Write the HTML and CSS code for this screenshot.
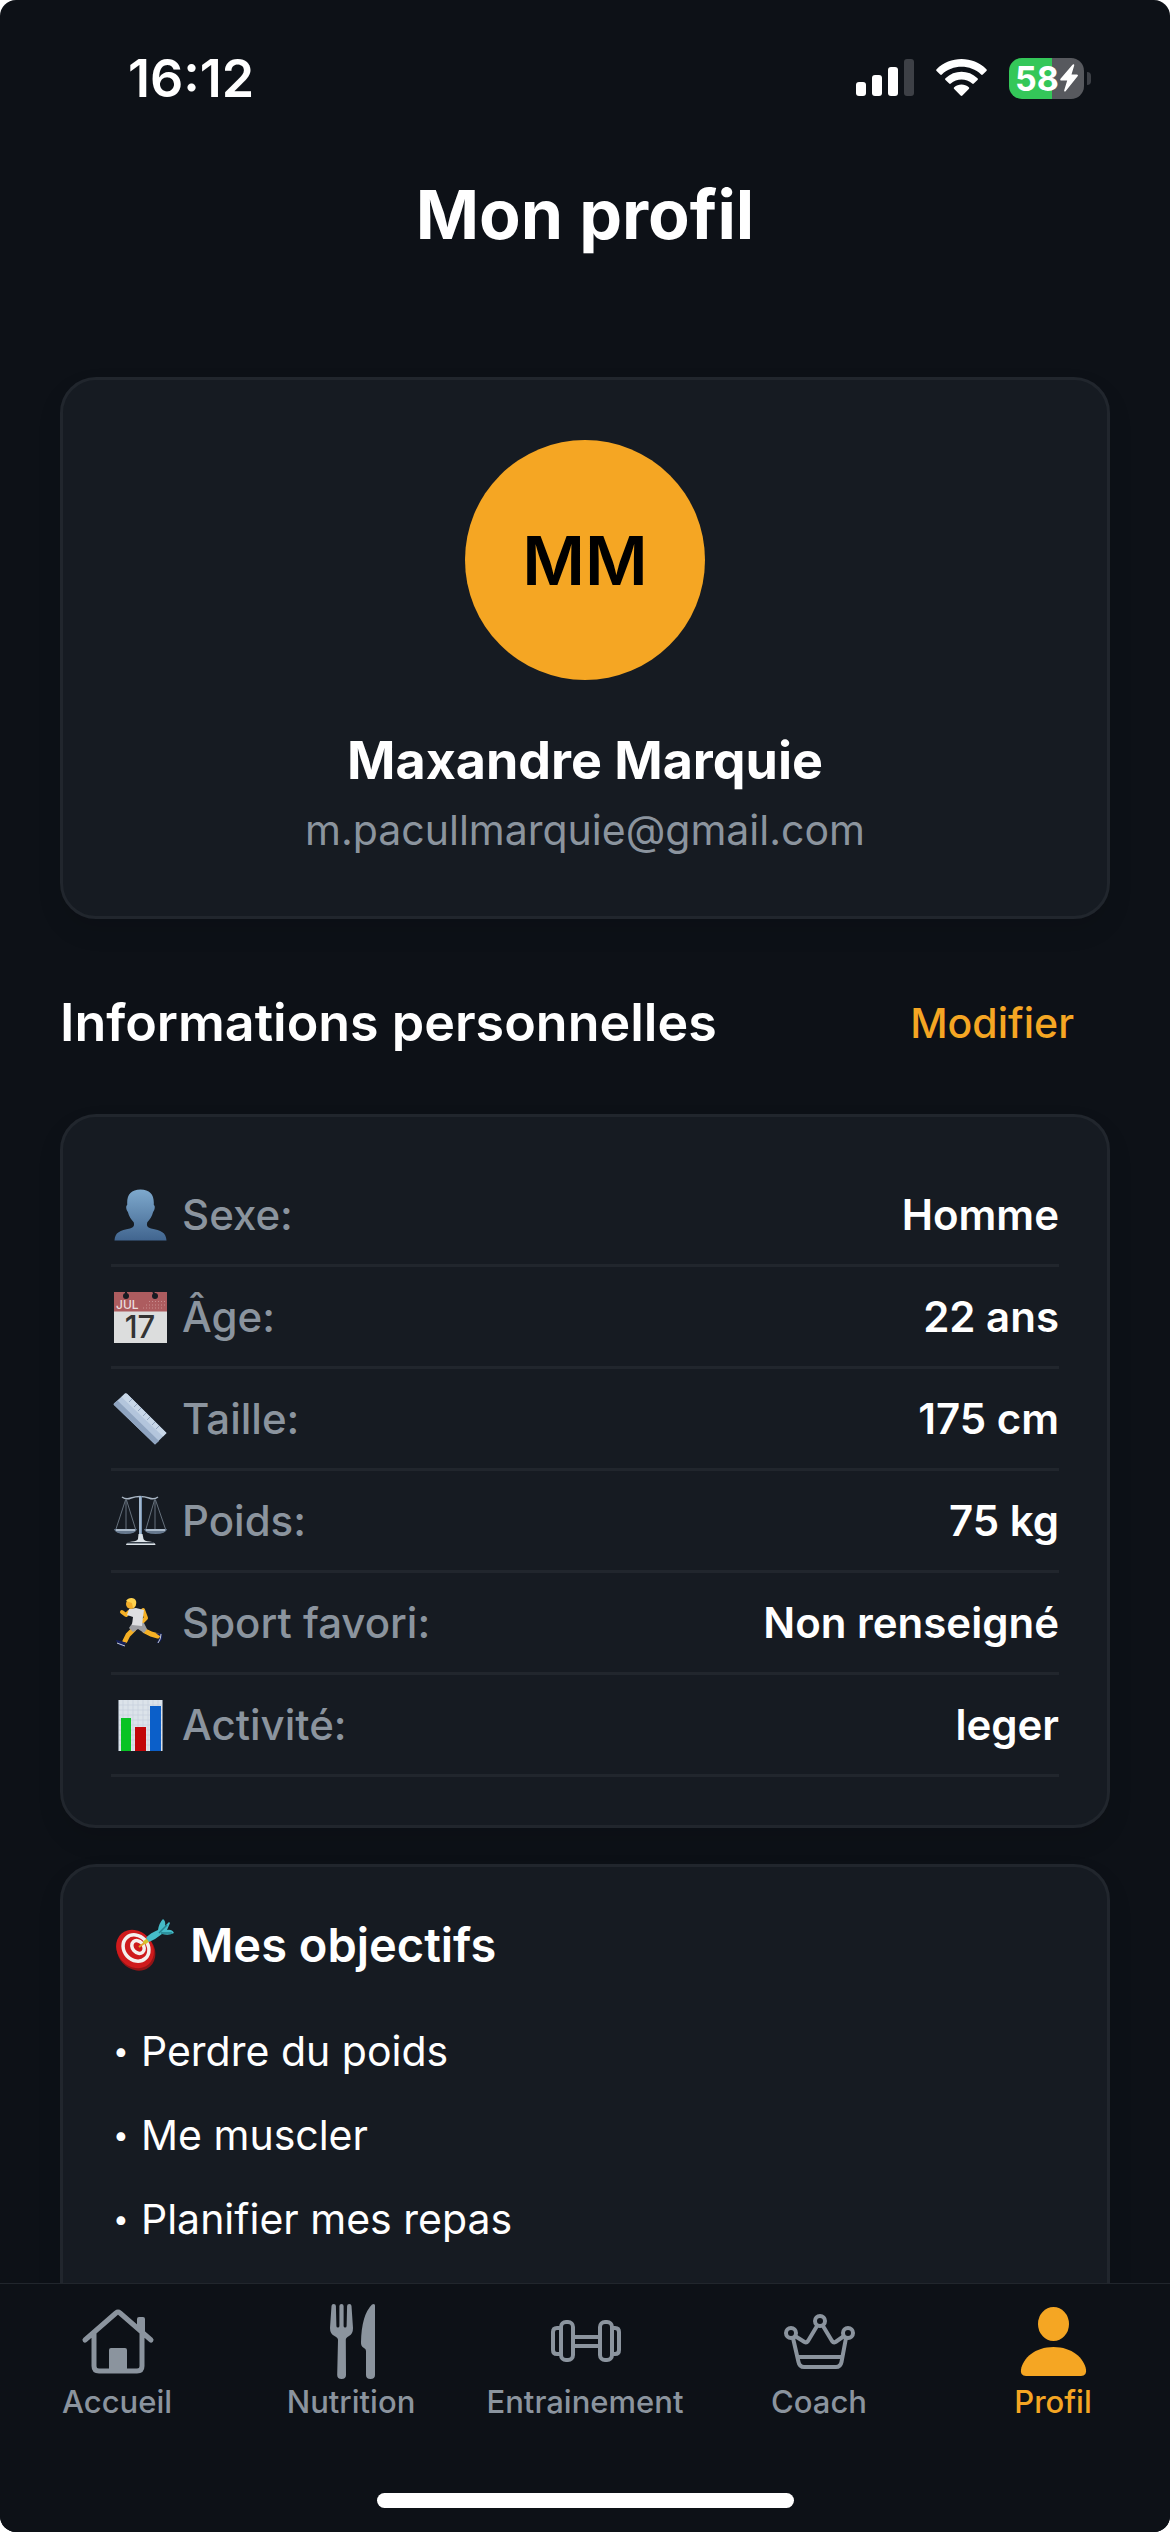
FILE: index.html
```html
<!DOCTYPE html>
<html lang="fr">
<head>
<meta charset="utf-8">
<meta name="viewport" content="width=device-width, initial-scale=1">
<title>Mon profil</title>
<link rel="stylesheet" href="styles.css">
</head>
<body>
<div class="app">
  <div class="status-bar">
    <time class="clock">16:12</time>
    <div class="indicators">
      <svg width="58" height="38" viewBox="0 0 58 38" aria-hidden="true">
        <g fill="#fff"><rect x="0" y="23" width="10" height="14" rx="3"/><rect x="16" y="16" width="10" height="21" rx="3"/><rect x="32" y="8" width="10" height="29" rx="3"/></g>
        <rect x="48" y="0" width="10" height="37" rx="3" fill="#3d4046"/>
      </svg>
      <svg width="51" height="38" viewBox="0 0 51 38" fill="#fff" aria-hidden="true">
        <path d="M.6 10.2C14-3.4 37-3.4 50.400 10.200c.6.6.6 1.200 0 1.800l-3.600 3.500c-.5.5-1.200.5-1.700 0-10.800-10.200-28.400-10.200-39.200 0-.5.5-1.200.5-1.700 0L.6 12c-.6-.6-.6-1.200 0-1.800z"/>
        <path d="M9.500 19.300c8.900-8.600 23.100-8.600 32 0 .6.6.6 1.200 0 1.700l-3.700 3.600c-.5.5-1.100.5-1.600 0-6-5.500-15.400-5.500-21.400 0-.5.5-1.100.5-1.600 0L9.500 21c-.6-.5-.6-1.100 0-1.700z"/>
        <path d="M18.200 28.300c4.100-3.600 10.500-3.600 14.600 0 .6.5.6 1.100 0 1.700l-6.400 6.500c-.5.600-1.300.6-1.800 0L18.200 30c-.6-.6-.6-1.200 0-1.700z"/>
      </svg>
      <div class="battery">
        <div class="battery-body">
          <span>58</span>
          <svg width="18" height="28" viewBox="0 0 18 28" fill="#fff" aria-hidden="true"><path d="M12.500.8c.8-1.100 2-.6 1.700.7L11.500 10.500h5.300c1.100 0 1.500.9.8 1.800L5.800 27c-.8 1-2 .5-1.600-.8L7.200 16.500H1.400c-1.100 0-1.600-.9-.9-1.800z"/></svg>
        </div>
        <div class="battery-tip"></div>
      </div>
    </div>
  </div>

  <header class="page-header"><h1>Mon profil</h1></header>

  <main class="content">
    <section class="card identity">
      <div class="avatar">MM</div>
      <h2 class="name">Maxandre Marquie</h2>
      <p class="email">m.pacullmarquie@gmail.com</p>
    </section>

    <div class="section-header">
      <h2>Informations personnelles</h2>
      <button type="button" class="edit">Modifier</button>
    </div>

    <section class="card">
      <dl class="info">
        <div class="row">
          <dt>
            <svg class="emoji" viewBox="0 0 54 52" aria-hidden="true">
              <defs><linearGradient id="bust" x1="0" y1="0" x2="0" y2="1"><stop offset="0" stop-color="#7ea9cd"/><stop offset="1" stop-color="#41658f"/></linearGradient></defs>
              <path fill="url(#bust)" d="M27.500.500c9 0 13.300 5 13.300 13v2.500c1.600.8 1.200 4.500-.7 7-1 4.500-3.200 7.400-5.800 10.300-1 3.400.1 5.200 3.700 6.100C48 41.600 53 43 53.500 51.500H1.500C2 43 7 41.600 17 39.400c3.600-.9 4.700-2.700 3.700-6.100-2.600-2.900-4.800-5.800-5.800-10.300-1.900-2.500-2.300-6.200-.7-7v-2.500c0-8 4.300-13 13.300-13z"/>
            </svg>
            Sexe:
          </dt>
          <dd>Homme</dd>
        </div>
        <div class="row">
          <dt>
            <svg class="emoji" viewBox="0 0 54 52" aria-hidden="true">
              <path fill="#dcdddd" d="M1 20h53v32H1z"/><path fill="#ad5c5f" d="M1 1h53v19.500H1z"/>
              <g fill="#171b22"><circle cx="13" cy="5" r="3"/><circle cx="42" cy="5" r="3"/><path d="M12 0h2v5h-2zM39 0h2l2 5h-2z"/></g>
              <path stroke="#c98f91" stroke-dasharray="1 2" d="M36 10.500h16M33 14h19M30 17h19"/>
              <text class="cal-month" x="3" y="18">JUL</text><text class="cal-day" x="27" y="47" text-anchor="middle">17</text>
            </svg>
            Âge:
          </dt>
          <dd>22 ans</dd>
        </div>
        <div class="row">
          <dt>
            <svg class="emoji" viewBox="0 0 54 52" aria-hidden="true">
              <path fill="#b3c5dc" d="M1 10.500 12 .5q1-.8 2 .2L53.500 40 42 51.500 1 12q-.7-.7 0-1.500z"/>
              <path fill="#8fa4c0" d="M1 10.500 4.500 7.500 46 48 42 51.500 1 12q-.7-.7 0-1.500z"/>
              <path fill="#c8d7e8" d="m12 .5 2 .2L53.500 40l-3.500 3.500L8.500 4z"/>
              <path fill="none" stroke="#8397b3" stroke-width=".8" d="m16 9 3-3m2 8 3-3m1 7 3-3m2 8 3-3m1 7 3-3m2 8 3-3m1 7 3-3"/>
            </svg>
            Taille:
          </dt>
          <dd>175 cm</dd>
        </div>
        <div class="row">
          <dt>
            <svg class="emoji" viewBox="0 0 54 52" fill="none" aria-hidden="true">
              <path stroke="#65707c" d="M13 4v32M42 4v32M12.500 5 3 34M13.500 5l9 29M41.500 5 33 34M42.500 5l10 29"/>
              <path stroke="#a8b5c3" stroke-width="1.500" d="M9 2q4 3 9 1 9-3 18 0 5 2 9-1"/>
              <path stroke="#7893b1" stroke-width="3" d="M27.500 1v44"/><path stroke="#c9d9e8" d="M27 1v44"/>
              <path fill="#67798e" d="M1 34h23q-1 5-11.500 5T1 34zM31 34h23q-1 5-11.500 5T31 34z"/>
              <path stroke="#c2d0de" stroke-width="1.500" d="M3 35h19M33 35h19"/>
              <path fill="#dce3e9" d="M25.500 39h4l1 5q1 2 6 2.500 6 1 6 3.500H13q0-2.500 6-3.500 5-.5 6-2.500z"/>
              <path fill="#343e49" d="M15 47h25l1 1.500H14z"/>
            </svg>
            Poids:
          </dt>
          <dd>75 kg</dd>
        </div>
        <div class="row">
          <dt>
            <svg class="emoji" viewBox="0 0 54 52" aria-hidden="true">
              <path fill="none" stroke="#f5b024" stroke-width="5" stroke-linecap="round" stroke-linejoin="round" d="m21 32-6 6-3 6M32 34l6 3 7 2"/>
              <path fill="none" stroke="#f5b024" stroke-width="4" stroke-linecap="round" stroke-linejoin="round" d="m30 13 3 8-5 5M16 15l-3 3-4-3"/>
              <path fill="#9d9ea2" d="m20 25 11 1 3 6-3 4-6-4-5 3-4-4z"/>
              <path fill="#dedfe1" d="m16 12 7-1 8 2-1 7-1 9-10-1 1-8-6-2z"/>
              <circle cx="18" cy="7" r="5" fill="#f2ae2b"/><path fill="#ffd34f" d="M13 4c2-4 9-4 10 0 1 3-1 6-3 7l-1-5z"/>
              <path fill="#15205c" d="m4 44 8 2-2 3q-4-1-6-5zM45 37l3 2-3 6q5-2 3-8z" stroke="#15205c" stroke-width="1.500"/>
              <path stroke="#c7ccd5" d="m4 46 8 3M45 46q3-4 3-9" fill="none"/>
            </svg>
            Sport favori:
          </dt>
          <dd>Non renseigné</dd>
        </div>
        <div class="row">
          <dt>
            <svg class="emoji" viewBox="0 0 54 52" aria-hidden="true">
              <path fill="#dce3ea" d="M5 1h45v51H5z"/>
              <path stroke="#c5cfda" stroke-width=".6" d="M5 6h45M5 11h45M5 16h45M5 21h45M5 26h45M5 31h45M5 36h45M5 41h45M5 46h45M10 1v51M15 1v51M20 1v51M25 1v51M30 1v51M35 1v51M40 1v51M45 1v51"/>
              <path fill="#08c324" d="M8 19h10v33H8z"/><path fill="#c20508" d="M22 28h11v24H22z"/><path fill="#0b5fc9" d="M37 7h11v45H37z"/>
              <path stroke="#7b848f" d="M5.500 1v51M49.500 1v51"/>
            </svg>
            Activité:
          </dt>
          <dd>leger</dd>
        </div>
      </dl>
    </section>

    <section class="card goals">
      <h2>
        <svg class="emoji-large" viewBox="0 0 60 52" aria-hidden="true">
          <ellipse cx="22" cy="32" rx="18" ry="21" transform="rotate(-42 22 32)" fill="#931416"/>
          <ellipse cx="21" cy="30" rx="17.500" ry="20.500" transform="rotate(-42 21 30)" fill="#cf1a1c"/>
          <g fill="none" stroke="#f4f0ee" stroke-width="3.500"><ellipse cx="22" cy="29" rx="12" ry="14" transform="rotate(-42 22 29)"/><ellipse cx="24" cy="28" rx="5.500" ry="7" transform="rotate(-42 24 28)"/></g>
          <path stroke="#e5a52b" stroke-width="2" d="m25 28 8-6"/><path stroke="#d7c528" stroke-width="4" d="m30 24 4-3"/>
          <path fill="#45bcc8" d="M32 19q4-5 12-8Q45 4 49 0q3 2 2 7l4-4 1 1-3 7q5-1 7 3-5 3-12 1-6 5-13 8z"/>
          <path fill="none" stroke="#25838f" stroke-width="1.500" d="m45 14 8-8M47 14l11 0"/>
        </svg>
        Mes objectifs
      </h2>
      <ul>
        <li><span class="bullet">•</span>Perdre du poids</li>
        <li><span class="bullet">•</span>Me muscler</li>
        <li><span class="bullet">•</span>Planifier mes repas</li>
      </ul>
    </section>
  </main>

  <footer class="tab-bar">
    <nav class="tabs" aria-label="Navigation principale">
      <a class="tab" href="#accueil">
        <svg viewBox="0 0 80 80" fill="none" stroke="currentColor" stroke-width="5" stroke-linecap="round" stroke-linejoin="round" aria-hidden="true">
          <path d="M8 40 39 13q2-1.600 4 0l31 27M17 33v33q0 5 5 5h38q5 0 5-5V33"/>
          <path fill="currentColor" stroke="none" d="M32 50q0-2 2-2h14q2 0 2 2v21H32zM60 19q0-2 2-2h4q2 0 2 2v17l-8-6z"/>
        </svg>
        Accueil
      </a>
      <a class="tab" href="#nutrition">
        <svg viewBox="0 0 80 80" fill="currentColor" aria-hidden="true">
          <path d="M20.500 6q0-2 2.200-2t2.200 2l.5 20q0 1.500 1.500 1.500t1.500-1.500V6q0-2 2.100-2t2.100 2v20q0 1.500 1.500 1.500t1.500-1.500l.5-20q0-2 2.200-2t2.200 2L42 28q0 6-4 8-3.500 1.800-3.200 4L35 75q0 4-4.400 4T26.200 75L27 40q.2-2.200-3.500-4-4.500-2-4.500-8z"/>
          <path d="M61 4.500q3-1.500 3 1V75q0 4-4.500 4T55 75V51q0-2-2-3-3.300-1.600-3-6 .5-27 11-37.500z"/>
        </svg>
        Nutrition
      </a>
      <a class="tab" href="#entrainement">
        <svg viewBox="0 0 80 80" fill="none" stroke="currentColor" stroke-width="4" aria-hidden="true">
          <rect x="16" y="22" width="12" height="38" rx="5"/><rect x="55" y="22" width="12" height="38" rx="5"/>
          <path d="M15 28h-3q-4 0-4 4v18q0 4 4 4h3M68 28h2q4 0 4 4v18q0 4-4 4h-2M29 37h25M29 46h25"/>
        </svg>
        Entrainement
      </a>
      <a class="tab" href="#coach">
        <svg viewBox="0 0 80 80" fill="none" stroke="currentColor" stroke-width="4" stroke-linejoin="round" aria-hidden="true">
          <circle cx="12" cy="33" r="5"/><circle cx="41" cy="21" r="5"/><circle cx="69" cy="33" r="5"/>
          <path d="m14 38 5.500 24q1 5 5.500 5h32q4.500 0 5.500-5L67 38M19 57h44M16 36l9.500 6q2 1 3.500-1l9-15M44 26l9 15q1.500 2 3.500 1l8.500-6"/>
        </svg>
        Coach
      </a>
      <a class="tab active" href="#profil" aria-current="page">
        <svg viewBox="0 0 80 80" fill="currentColor" aria-hidden="true">
          <ellipse cx="40.500" cy="24" rx="15.500" ry="17"/>
          <path d="M40.500 47C59 47 71 58 73 69.500q1 6.500-5 6.500H13q-6 0-5-6.500C10 58 22 47 40.500 47z"/>
        </svg>
        Profil
      </a>
    </nav>
    <div class="home-indicator"></div>
  </footer>
</div>
</body>
</html>
```
FILE: styles.css
```css
:root {
  --page: #0d1117;
  --card: #161b22;
  --line: #21262d;
  --muted: #8b949e;
  --accent: #f5a623;
}

* { box-sizing: border-box; margin: 0; padding: 0; }

body {
  background: #fff;
  color: #fff;
  font-family: Inter, "Liberation Sans", sans-serif;
}

svg { display: block; flex: none; overflow: visible; }

.app {
  display: flex;
  flex-direction: column;
  height: 100vh;
  overflow: hidden;
  border-radius: 16px;
  background: var(--page);
}

.status-bar {
  display: flex;
  flex: none;
  align-items: center;
  justify-content: space-between;
  height: 156px;
  padding: 0 79px 0 128px;
}

.clock { font-size: 52px; font-weight: 600; }

.indicators { display: flex; align-items: center; gap: 22px; }

.battery { display: flex; align-items: center; gap: 3px; }

.battery-body {
  display: flex;
  align-items: center;
  justify-content: center;
  gap: 1px;
  width: 75px;
  height: 41px;
  border-radius: 13px;
  background: linear-gradient(90deg, #34c759 57%, #57595e 57%);
  font-size: 34px;
  font-weight: 700;
  line-height: 41px;
}

.battery-tip {
  width: 4px;
  height: 13px;
  border-radius: 0 4px 4px 0;
  background: #3d4046;
}

.page-header {
  flex: none;
  padding: 16px 60px;
  text-align: center;
}

h1 { font-size: 68px; font-weight: 700; line-height: 85px; }

.content {
  flex: 1;
  min-height: 0;
  padding: 104px 60px 60px;
  overflow-y: auto;
  scrollbar-width: none;
}

.card {
  padding: 48px;
  border: 3px solid var(--line);
  border-radius: 36px;
  background: var(--card);
  box-shadow: 0 12px 24px rgba(0, 0, 0, 0.1);
}

.identity {
  display: flex;
  flex-direction: column;
  align-items: center;
  padding: 60px;
}

.avatar {
  display: flex;
  align-items: center;
  justify-content: center;
  width: 240px;
  height: 240px;
  border-radius: 50%;
  background: var(--accent);
  color: #000;
  font-size: 68px;
  font-weight: 600;
}

.name { margin-top: 48px; font-size: 52px; font-weight: 700; line-height: 66px; }

.email { margin-top: 10px; color: var(--muted); font-size: 41px; line-height: 52px; }

.section-header {
  display: flex;
  align-items: center;
  justify-content: space-between;
  padding: 74px 0 61px;
}

.section-header h2 { font-size: 52px; font-weight: 600; line-height: 60px; }

.edit {
  padding: 0 36px;
  border: 0;
  background: none;
  color: var(--accent);
  font: 500 41px/60px Inter, "Liberation Sans", sans-serif;
}

.row {
  display: flex;
  align-items: center;
  justify-content: space-between;
  height: 102px;
  border-bottom: 3px solid var(--line);
}

.row dt {
  display: flex;
  align-items: center;
  gap: 15px;
  color: var(--muted);
  font-size: 42px;
  font-weight: 500;
}

.row dd { font-size: 42px; font-weight: 600; }

.emoji { width: 54px; height: 52px; margin-left: 2px; }

.cal-month { fill: #eadfdf; font-size: 12px; font-weight: 500; }
.cal-day { fill: #333; font-size: 31px; font-weight: 500; }

.goals { margin-top: 36px; }

.goals h2 {
  display: flex;
  align-items: center;
  gap: 16px;
  font-size: 47px;
  font-weight: 600;
  line-height: 60px;
}

.emoji-large { width: 60px; height: 52px; margin-left: 3px; }

.goals ul { margin-top: 46px; list-style: none; }

.goals li { display: flex; margin-bottom: 24px; font-size: 41px; line-height: 60px; }

.bullet { width: 30px; padding-left: 2px; font-size: 28px; }

.tab-bar {
  flex: none;
  padding: 16px 0 24px;
  border-top: 1px solid var(--line);
  background: var(--page);
}

.tabs { display: grid; grid-template-columns: repeat(5, 1fr); }

.tab {
  display: flex;
  flex-direction: column;
  align-items: center;
  gap: 2px;
  color: var(--muted);
  font-size: 31px;
  font-weight: 500;
  line-height: 40px;
  text-decoration: none;
}

.tab svg { width: 80px; height: 80px; }

.tab.active { color: var(--accent); }

.home-indicator {
  width: 417px;
  height: 15px;
  margin: 71px auto 0;
  border-radius: 8px;
  background: #fff;
}
```
